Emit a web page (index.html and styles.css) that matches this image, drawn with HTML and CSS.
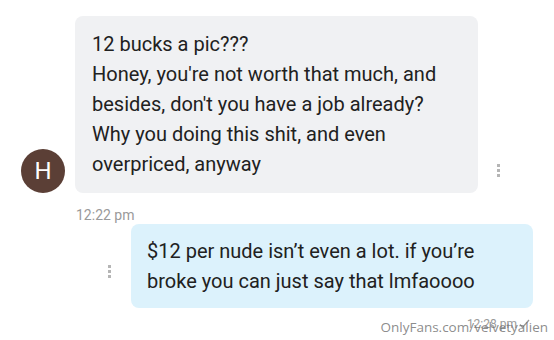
FILE: index.html
```html
<!DOCTYPE html>
<html lang="en">
<head>
    <meta charset="UTF-8">
    <meta name="viewport" content="width=device-width, initial-scale=1.0">
    <title>Messages</title>
    <link rel="stylesheet" href="styles.css">
</head>
<body>
    <div class="chat">
        <!-- Incoming message -->
        <div class="msg __isIncoming">
            <div class="avatar">H</div>
            <div class="bubble __isGrey">
                12 bucks a pic???<br>
                Honey, you're not worth that much, and besides, don't you have a job already?
                Why you doing this shit, and even overpriced, anyway
            </div>
            <span class="dots"><i></i><i></i><i></i></span>
        </div>
        <div class="time __isLeft">12:22 pm</div>

        <!-- Outgoing message -->
        <div class="msg __isOutgoing">
            <span class="dots"><i></i><i></i><i></i></span>
            <div class="bubble __isBlue">
                $12 per nude isn’t even a lot. if you’re broke you can just say that lmfaoooo
            </div>
        </div>
        <div class="time __isRight">
            12:28 pm
            <svg class="check" width="11" height="10" viewBox="0 0 11 10">
                <path d="M1 5.5 L3.5 8.5 L10 1" fill="none" stroke="#9a9a9a" stroke-width="1.3"/>
            </svg>
        </div>
    </div>

    <div class="watermark">OnlyFans.com/velvetyalien</div>
</body>
</html>
```

FILE: styles.css
```css
body {
    margin: 0;
    background: #fff;
    font-family: Roboto, "Noto Sans", sans-serif;
    color: #212121;
    position: relative;
    height: 340px;
    overflow: hidden;
}

.chat {
    display: flex;
    flex-direction: column;
    padding-top: 16px;
}

.msg {
    display: flex;
    align-items: flex-end;
}

.msg.__isIncoming {
    padding-left: 21px;
}

.msg.__isOutgoing {
    padding-left: 108px;
    margin-top: 1px;
    align-items: center;
}

.avatar {
    width: 44px;
    height: 44px;
    border-radius: 50%;
    background-color: #5b3f36;
    color: #fff;
    font-size: 24px;
    display: flex;
    align-items: center;
    justify-content: center;
    margin-right: 10px;
    flex-shrink: 0;
}

.bubble {
    font-size: 20px;
    line-height: 30px;
    border-radius: 8px;
}

.bubble.__isGrey {
    width: 403px;
    box-sizing: border-box;
    padding: 13px 16px 14px 17px;
    background-color: #f0f1f3;
}

.bubble.__isBlue {
    width: 402px;
    box-sizing: border-box;
    padding: 12px 16px;
    background-color: #dcf2fc;
}

.dots {
    display: flex;
    flex-direction: column;
    gap: 2px;
    width: 3px;
}

.msg.__isIncoming .dots {
    margin-left: 19px;
    margin-bottom: 16px;
}

.msg.__isOutgoing .dots {
    margin-right: 20px;
    margin-top: 10px;
}

.dots i {
    display: block;
    width: 3px;
    height: 3px;
    background-color: #b5b5b5;
}

.time {
    font-size: 14px;
    color: #9a9a9a;
    line-height: 16px;
}

.time.__isLeft {
    padding-left: 76px;
    margin-top: 14px;
}

.time.__isRight {
    align-self: flex-end;
    font-size: 12px;
    line-height: 14px;
    margin-right: 24px;
    margin-top: 9px;
    display: flex;
    align-items: center;
    gap: 2px;
}

/* Watermark over the bottom corner */
.watermark {
    position: absolute;
    right: 6px;
    top: 318px;
    font-family: "Open Sans", sans-serif;
    font-size: 13.5px;
    line-height: 18px;
    color: rgba(110, 110, 110, 0.8);
}
```
